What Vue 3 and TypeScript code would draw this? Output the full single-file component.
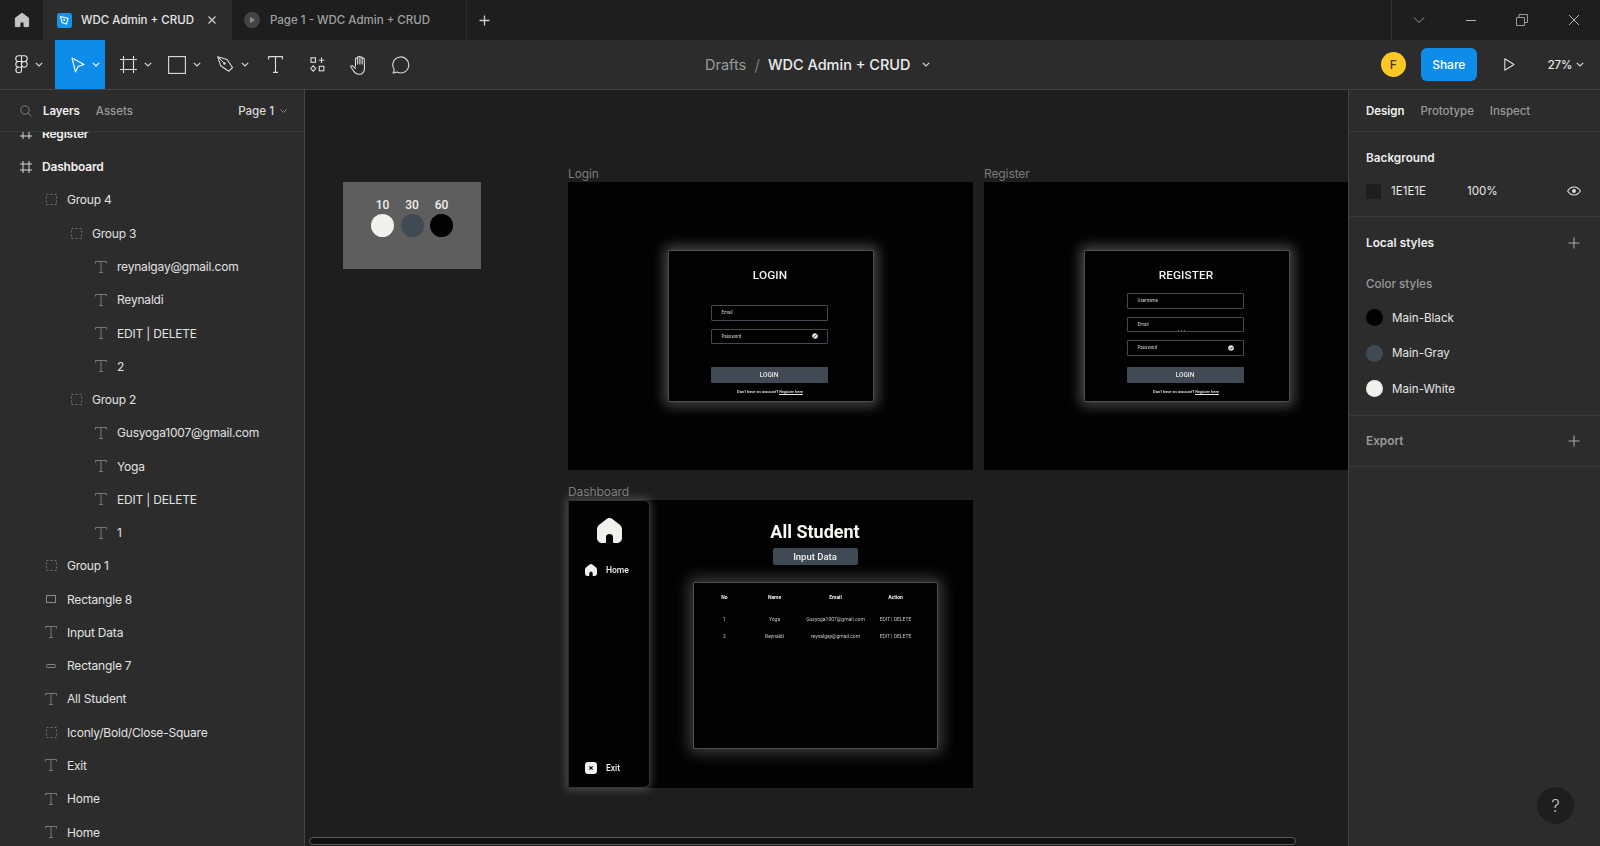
<script setup lang="ts">
interface Layer { name: string; icon: 'frame' | 'group' | 'text' | 'rect' | 'bar'; depth: number; strong?: boolean }
const layers: Layer[] = [
  { name: 'Register', icon: 'frame', depth: 0, strong: true },
  { name: 'Dashboard', icon: 'frame', depth: 0, strong: true },
  { name: 'Group 4', icon: 'group', depth: 1 },
  { name: 'Group 3', icon: 'group', depth: 2 },
  { name: 'reynalgay@gmail.com', icon: 'text', depth: 3 },
  { name: 'Reynaldi', icon: 'text', depth: 3 },
  { name: 'EDIT | DELETE', icon: 'text', depth: 3 },
  { name: '2', icon: 'text', depth: 3 },
  { name: 'Group 2', icon: 'group', depth: 2 },
  { name: 'Gusyoga1007@gmail.com', icon: 'text', depth: 3 },
  { name: 'Yoga', icon: 'text', depth: 3 },
  { name: 'EDIT | DELETE', icon: 'text', depth: 3 },
  { name: '1', icon: 'text', depth: 3 },
  { name: 'Group 1', icon: 'group', depth: 1 },
  { name: 'Rectangle 8', icon: 'rect', depth: 1 },
  { name: 'Input Data', icon: 'text', depth: 1 },
  { name: 'Rectangle 7', icon: 'bar', depth: 1 },
  { name: 'All Student', icon: 'text', depth: 1 },
  { name: 'Iconly/Bold/Close-Square', icon: 'group', depth: 1 },
  { name: 'Exit', icon: 'text', depth: 1 },
  { name: 'Home', icon: 'text', depth: 1 },
  { name: 'Home', icon: 'text', depth: 1 },
]
const depthClass = (d: number): string => `depth${d}`
const styles = [
  { name: 'Main-Black', color: '#020202' },
  { name: 'Main-Gray', color: '#3f4a54' },
  { name: 'Main-White', color: '#f0f0ec' },
]
const swatches = [
  { label: '10', color: '#f0f0ec' },
  { label: '30', color: '#3f4a54' },
  { label: '60', color: '#020202' },
]
const rows = [
  { no: '1', name: 'Yoga', email: 'Gusyoga1007@gmail.com', action: 'EDIT | DELETE' },
  { no: '2', name: 'Reynaldi', email: 'reynalgay@gmail.com', action: 'EDIT | DELETE' },
]
</script>

<template>
  <div class="app">
    <header class="tabbar">
      <div class="hometab">
        <svg width="16" height="16" viewBox="0 0 16 16"><path d="M8 1.2 14.6 6v8.6H10V10H6v4.6H1.4V6z" fill="#c4c4c4" stroke="#c4c4c4" stroke-linejoin="round"/></svg>
      </div>
      <div class="tab active">
        <span class="fileicon"><svg width="15" height="15" viewBox="0 0 15 15"><rect width="15" height="15" rx="2.5" fill="#1592ea"/><path d="M3.5 3.5 11 5.5 9.5 11 5 9.5z" fill="none" stroke="#fff" stroke-width="1.1"/><circle cx="7.2" cy="7" r="1" fill="#fff"/></svg></span>
        <span class="tabtitle">WDC Admin + CRUD</span>
        <svg class="tabclose" width="10" height="10" viewBox="0 0 10 10"><path d="M1.5 1.5l7 7M8.500 1.500l-7 7" stroke="#cfcfcf" stroke-width="1.200"/></svg>
      </div>
      <div class="tab inactive">
        <span class="playdot"><svg width="16" height="16" viewBox="0 0 16 16"><circle cx="8" cy="8" r="8" fill="#444"/><path d="M6 4.800v6.400l5-3.200z" fill="#8a8a8a"/></svg></span>
        <span class="tabtitle dim">Page 1 - WDC Admin + CRUD</span>
      </div>
      <div class="newtab">
        <svg width="11" height="11" viewBox="0 0 11 11"><path d="M5.500 .500v10M.5 5.500h10" stroke="#cfcfcf" stroke-width="1.300"/></svg>
      </div>
      <div class="winctl">
        <span class="winbtn"><svg width="12" height="12" viewBox="0 0 12 12"><path d="M1 3.500 6 8.500l5-5" fill="none" stroke="#9a9a9a"/></svg></span>
        <span class="winbtn"><svg width="12" height="12" viewBox="0 0 12 12"><path d="M1 6.500h10" stroke="#b5b5b5"/></svg></span>
        <span class="winbtn"><svg width="12" height="12" viewBox="0 0 12 12"><path d="M.5 3.500h8v8h-8zM3 3.500V.5h8.500v8H8.500" fill="none" stroke="#9a9a9a"/></svg></span>
        <span class="winbtn"><svg width="12" height="12" viewBox="0 0 12 12"><path d="M1 1l10 10M11 1 1 11" stroke="#b5b5b5"/></svg></span>
      </div>
    </header>

    <nav class="toolbar">
      <div class="tools">
        <div class="tool logo">
          <svg width="13" height="19" viewBox="0 0 13 19" fill="none" stroke="#e4e4e4" stroke-width="1.100"><path d="M6.500.8H3.600a2.800 2.800 0 0 0 0 5.700h2.900zM6.500.8h2.900a2.800 2.800 0 0 1 0 5.700H6.500zM6.500 6.500H3.600a2.800 2.800 0 0 0 0 5.700h2.900zM12.200 9.300a2.800 2.800 0 1 1-5.700 0 2.800 2.800 0 0 1 5.700 0zM6.500 12.200H3.600a2.800 2.800 0 1 0 2.900 2.800z"/></svg>
          <svg class="chev" width="8" height="5" viewBox="0 0 8 5"><path d="M.8.800 4 4l3.200-3.200" fill="none" stroke="#dcdcdc" stroke-width="1.100"/></svg>
        </div>
        <div class="tool move">
          <svg width="14" height="16" viewBox="0 0 14 16"><path d="M1 1 13 7.500 7 9.500 4.500 15z" fill="none" stroke="#fff" stroke-width="1.100" stroke-linejoin="round"/></svg>
          <svg class="chev" width="8" height="5" viewBox="0 0 8 5"><path d="M.8.800 4 4l3.200-3.200" fill="none" stroke="#fff" stroke-width="1.100"/></svg>
        </div>
        <div class="tool frame">
          <svg width="17" height="17" viewBox="0 0 17 17"><path d="M3.500 0v17M13.500 0v17M0 3.500h17M0 13.500h17" stroke="#dcdcdc" stroke-width="1.100"/></svg>
          <svg class="chev" width="8" height="5" viewBox="0 0 8 5"><path d="M.8.800 4 4l3.200-3.200" fill="none" stroke="#dcdcdc" stroke-width="1.100"/></svg>
        </div>
        <div class="tool shape">
          <svg width="18" height="18" viewBox="0 0 18 18"><rect x=".6" y=".6" width="16.800" height="16.800" fill="none" stroke="#dcdcdc" stroke-width="1.100"/></svg>
          <svg class="chev" width="8" height="5" viewBox="0 0 8 5"><path d="M.8.800 4 4l3.200-3.200" fill="none" stroke="#dcdcdc" stroke-width="1.100"/></svg>
        </div>
        <div class="tool pen">
          <svg width="17" height="17" viewBox="0 0 17 17"><path d="M.8.800 10 3.500l5.500 8-3.800 3.800-8-5.500z" fill="none" stroke="#dcdcdc" stroke-width="1.100" stroke-linejoin="round"/><path d="M.8.800 7 7" stroke="#dcdcdc"/><circle cx="7.500" cy="7.500" r="1.200" fill="#dcdcdc"/></svg>
          <svg class="chev" width="8" height="5" viewBox="0 0 8 5"><path d="M.8.800 4 4l3.200-3.200" fill="none" stroke="#dcdcdc" stroke-width="1.100"/></svg>
        </div>
        <div class="tool texttool">
          <svg width="15" height="17" viewBox="0 0 15 17"><path d="M.6 3.500V.6h13.800v2.900M7.500.6v15.800M5 16.400h5" fill="none" stroke="#dcdcdc" stroke-width="1.100"/></svg>
        </div>
        <div class="tool res">
          <svg width="15" height="15" viewBox="0 0 15 15" fill="none" stroke="#dcdcdc" stroke-width="1.100"><rect x="1" y=".8" width="4.500" height="4.500"/><path d="M11.500 .5v5.500M8.800 3.200h5.500"/><path d="M3.200 8.800 5.700 11.500 3.200 14.200.7 11.500z"/><rect x="9.300" y="9.300" width="4.500" height="4.500"/></svg>
        </div>
        <div class="tool hand">
          <svg width="19" height="20" viewBox="0 0 19 20"><path d="M5.500 11V4a1.100 1.100 0 0 1 2.200 0V2.400a1.100 1.100 0 0 1 2.200 0V3a1.100 1.100 0 0 1 2.200 0v1.200a1.100 1.100 0 0 1 2.200 0l.2 8.800c0 4-2.400 6.300-5.600 6.300-2.700 0-4-1.400-5.500-3.600L1 12.300c-.7-1.200.8-2.200 1.900-1.200l2.600 2.400M7.700 4v5M9.900 3v6M12.100 3v6" fill="none" stroke="#dcdcdc" stroke-width="1.100" stroke-linecap="round" stroke-linejoin="round"/></svg>
        </div>
        <div class="tool comment">
          <svg width="18" height="18" viewBox="0 0 18 18"><path d="M1 17c.7-1 1.200-2.200 1.200-3.500A8 8 0 1 1 5 16c-1.300.7-2.600 1-4 1z" fill="none" stroke="#dcdcdc" stroke-width="1.100" stroke-linejoin="round"/></svg>
        </div>
      </div>
      <div class="crumbs">
        <span class="drafts">Drafts</span>
        <span class="slash">/</span>
        <span class="docname">WDC Admin + CRUD</span>
        <svg width="8" height="5" viewBox="0 0 8 5"><path d="M.8.800 4 4l3.200-3.200" fill="none" stroke="#dcdcdc" stroke-width="1.100"/></svg>
      </div>
      <div class="actions">
        <span class="avatar">F</span>
        <span class="share">Share</span>
        <svg class="play" width="11" height="13" viewBox="0 0 11 13"><path d="M.8.800 10 6.500.8 12.200z" fill="none" stroke="#dcdcdc" stroke-width="1.100" stroke-linejoin="round"/></svg>
        <span class="zoomval">27%</span>
        <svg width="8" height="5" viewBox="0 0 8 5"><path d="M.8.800 4 4l3.200-3.200" fill="none" stroke="#dcdcdc" stroke-width="1.100"/></svg>
      </div>
    </nav>

    <div class="workspace">
      <aside class="left">
        <div class="panelhead">
          <svg class="search" width="12" height="12" viewBox="0 0 12 12"><circle cx="5" cy="5" r="4.200" fill="none" stroke="#7f7f7f"/><path d="M8 8l3.500 3.500" stroke="#7f7f7f"/></svg>
          <span class="ptab on">Layers</span>
          <span class="ptab">Assets</span>
          <span class="pageselect">Page 1
            <svg width="7" height="4" viewBox="0 0 7 4"><path d="M.5.500 3.500 3.500l3-3" fill="none" stroke="#8a8a8a"/></svg>
          </span>
        </div>
        <ul class="layerlist">
          <li v-for="(l, i) in layers" :key="i" class="layer" :class="[depthClass(l.depth), { strong: l.strong }]">
            <span class="layericon">
              <svg v-if="l.icon === 'frame'" width="12" height="12" viewBox="0 0 12 12"><path d="M3 0v12M9 0v12M0 3h12M0 9h12" stroke="#d8d8d8"/></svg>
              <svg v-else-if="l.icon === 'group'" width="11" height="11" viewBox="0 0 11 11"><rect x=".5" y=".5" width="10" height="10" fill="none" stroke="#6e6e6e" stroke-dasharray="2 2"/></svg>
              <svg v-else-if="l.icon === 'text'" width="12" height="12" viewBox="0 0 12 12"><path d="M.5 2.500V.5h11v2M6 .5v11M4 11.500h4" fill="none" stroke="#787878"/></svg>
              <svg v-else-if="l.icon === 'rect'" width="10" height="8" viewBox="0 0 10 8"><rect x=".5" y=".5" width="9" height="7" fill="none" stroke="#8a8a8a"/></svg>
              <svg v-else width="10" height="4" viewBox="0 0 10 4"><rect x=".5" y=".5" width="9" height="3" rx="1" fill="none" stroke="#8a8a8a"/></svg>
            </span>
            <span class="layername">{{ l.name }}</span>
          </li>
        </ul>
      </aside>

      <main class="canvas">
        <section class="board palette">
          <div class="palcols">
            <div v-for="s in swatches" :key="s.label" class="palcol">
              <span class="pallabel">{{ s.label }}</span>
              <span class="paldot" :style="{ background: s.color }"></span>
            </div>
          </div>
        </section>

        <span class="boardlabel lbl-login">Login</span>
        <section class="board loginboard">
          <form class="card logincard">
            <h2 class="cardtitle">LOGIN</h2>
            <div class="field">Email</div>
            <div class="field pw">Password
              <svg width="6" height="6" viewBox="0 0 6 6"><circle cx="3" cy="3" r="2.800" fill="#e6e6e6"/><path d="M1 5l4-4" stroke="#222" stroke-width=".7"/></svg>
            </div>
            <div class="cta">LOGIN</div>
            <p class="foot">Don't have an account? <u>Register here</u></p>
          </form>
        </section>

        <span class="boardlabel lbl-register">Register</span>
        <section class="board registerboard">
          <form class="card registercard">
            <h2 class="cardtitle">REGISTER</h2>
            <div class="field">Username</div>
            <div class="field">Email</div>
            <span class="dots"><i></i><i></i><i></i></span>
            <div class="field pw">Password
              <svg width="6" height="6" viewBox="0 0 6 6"><circle cx="3" cy="3" r="2.800" fill="#e6e6e6"/><path d="M1.500 3 3 4.300 4.600 1.800" fill="none" stroke="#222" stroke-width=".7"/></svg>
            </div>
            <div class="cta">LOGIN</div>
            <p class="foot">Don't have an account? <u>Register here</u></p>
          </form>
        </section>

        <span class="boardlabel lbl-dash">Dashboard</span>
        <section class="board dashboard">
          <div class="sidebar">
            <svg class="bighome" width="25" height="25" viewBox="0 0 25 25"><path d="M12.500 0c1.300 0 2.500.6 3.500 1.400l6.500 5.200C24 7.800 25 9.500 25 11.500V20c0 2.800-2.200 5-5 5h-3c-.6 0-1-.4-1-1v-5c0-1.700-1.500-3-3.500-3S9 17.300 9 19v5c0 .6-.4 1-1 1H5c-2.800 0-5-2.200-5-5v-8.500c0-2 1-3.700 2.500-4.900L9 1.400C10 .6 11.200 0 12.500 0z" fill="#f0f0ec"/></svg>
            <div class="navitem home">
              <svg width="12" height="12" viewBox="0 0 25 25"><path d="M12.500 0c1.300 0 2.500.6 3.500 1.400l6.500 5.200C24 7.800 25 9.500 25 11.500V20c0 2.800-2.200 5-5 5h-3c-.6 0-1-.4-1-1v-5c0-1.700-1.500-3-3.500-3S9 17.300 9 19v5c0 .6-.4 1-1 1H5c-2.800 0-5-2.200-5-5v-8.500c0-2 1-3.700 2.500-4.900L9 1.400C10 .6 11.200 0 12.500 0z" fill="#f0f0ec"/></svg>
              <span>Home</span>
            </div>
            <div class="navitem exit">
              <svg width="12" height="12" viewBox="0 0 12 12"><rect width="12" height="12" rx="3" fill="#f0f0ec"/><path d="M4.300 4.300l3.400 3.400M7.700 4.300 4.300 7.700" stroke="#111" stroke-width="1.200"/></svg>
              <span>Exit</span>
            </div>
          </div>
          <div class="dashmain">
            <h1 class="dashtitle">All Student</h1>
            <div class="inputbtn">Input Data</div>
            <div class="tablecard">
              <table class="students">
                <thead>
                  <tr><th class="cno">No</th><th class="cname">Name</th><th class="cmail">Email</th><th class="cact">Action</th></tr>
                </thead>
                <tbody>
                  <tr v-for="r in rows" :key="r.no">
                    <td class="cno">{{ r.no }}</td><td class="cname">{{ r.name }}</td><td class="cmail">{{ r.email }}</td><td class="cact">{{ r.action }}</td>
                  </tr>
                </tbody>
              </table>
            </div>
          </div>
        </section>

        <div class="scrollbar"></div>
      </main>

      <aside class="right">
        <div class="panelhead righthead">
          <span class="ptab on">Design</span>
          <span class="ptab">Prototype</span>
          <span class="ptab">Inspect</span>
        </div>
        <section class="rsec bgsec">
          <h3 class="rhead">Background</h3>
          <div class="bgrow">
            <span class="bgchip"></span>
            <span class="bghex">1E1E1E</span>
            <span class="bgpct">100%</span>
            <svg class="eye" width="14" height="10" viewBox="0 0 14 10"><path d="M.7 5C2.200 2.300 4.400 1 7 1s4.800 1.300 6.300 4C11.800 7.700 9.600 9 7 9S2.200 7.700.7 5z" fill="none" stroke="#e4e4e4" stroke-width="1.100"/><circle cx="7" cy="5" r="1.900" fill="#e4e4e4"/></svg>
          </div>
        </section>
        <section class="rsec stylesec">
          <div class="rheadrow">
            <h3 class="rhead">Local styles</h3>
            <svg width="12" height="12" viewBox="0 0 12 12"><path d="M6 .5v11M.5 6h11" stroke="#a8a8a8" stroke-width="1.100"/></svg>
          </div>
          <p class="subhead">Color styles</p>
          <div v-for="s in styles" :key="s.name" class="stylerow">
            <span class="styledot" :style="{ background: s.color }"></span>
            <span>{{ s.name }}</span>
          </div>
        </section>
        <section class="rsec exportsec">
          <div class="rheadrow">
            <h3 class="rhead muted">Export</h3>
            <svg width="12" height="12" viewBox="0 0 12 12"><path d="M6 .5v11M.5 6h11" stroke="#a8a8a8" stroke-width="1.100"/></svg>
          </div>
        </section>
        <div class="help">?</div>
      </aside>
    </div>
  </div>
</template>

<style>
html, body { margin: 0; background: #2c2c2c; overflow: hidden; }
</style>

<style scoped>
.app { width: 1600px; height: 846px; display: flex; flex-direction: column; overflow: hidden; font-family: Inter, "Liberation Sans", sans-serif; color: #e8e8e8; font-size: 11.600px; }
.tabbar { height: 40px; background: #1e1e1e; display: flex; align-items: stretch; flex: none; }
.hometab { width: 43px; display: flex; align-items: center; justify-content: center; }
.tab { display: flex; align-items: center; font-size: 11.500px; font-weight: 500; box-sizing: border-box; }
.tab.active { width: 189px; background: #2c2c2c; padding-left: 14px; }
.tab.inactive { width: 235px; padding-left: 12px; border-right: 1px solid #2c2c2c; }
.fileicon { display: flex; margin-right: 9px; }
.playdot { display: flex; margin-right: 10px; }
.tabtitle { white-space: nowrap; color: #e6e6e6; }
.tabtitle.dim { color: #a0a0a0; }
.tabclose { margin-left: 13px; }
.newtab { width: 36px; display: flex; align-items: center; justify-content: center; margin-left: -1px; }
.winctl { margin-left: auto; width: 209px; border-left: 1px solid #333; display: flex; box-sizing: border-box; padding-left: 1px; }
.winbtn { width: 52px; display: flex; align-items: center; justify-content: center; }
.toolbar { height: 50px; flex: none; background: #2c2c2c; border-bottom: 1px solid #444; box-sizing: border-box; display: flex; position: relative; align-items: stretch; }
.tools { display: flex; align-items: center; height: 49px; }
.tool { height: 49px; display: flex; align-items: center; box-sizing: border-box; }
.chev { margin-left: 7px; }
.logo { width: 55px; padding-left: 15px; }
.move { width: 50px; background: #0d8ce9; padding-left: 16px; }
.frame { width: 48px; padding-left: 15px; }
.shape { width: 48px; padding-left: 15px; }
.pen { width: 49px; padding-left: 16px; }
.texttool { width: 60px; padding-left: 18px; }
.res { width: 40px; }
.hand { width: 42px; }
.comment { width: 30px; }
.crumbs { position: absolute; left: 705px; top: 0; height: 49px; display: flex; align-items: center; font-size: 14.500px; }
.drafts { color: #9a9a9a; }
.slash { color: #777; margin: 0 8px; font-size: 16px; }
.docname { color: #ececec; font-weight: 500; margin-right: 11px; }
.actions { margin-left: auto; display: flex; align-items: center; height: 49px; padding-right: 16px; }
.avatar { width: 25px; height: 25px; border-radius: 50%; background: #fcc825; color: #4a3a10; display: flex; align-items: center; justify-content: center; font-size: 12px; font-weight: 500; margin-right: 15px; }
.share { width: 56px; height: 33px; border-radius: 6px; background: #0d8ce9; color: #fff; display: flex; align-items: center; justify-content: center; font-weight: 500; font-size: 12px; margin-right: 27px; }
.play { margin-right: 33px; }
.zoomval { font-size: 11.400px; font-weight: 500; margin-right: 4px; letter-spacing: -.2px; }
.workspace { flex: 1; display: flex; min-height: 0; }
.left { width: 305px; flex: none; box-sizing: border-box; background: #2c2c2c; border-right: 1px solid #444; display: flex; flex-direction: column; }
.panelhead { height: 42px; flex: none; border-bottom: 1px solid #3a3a3a; box-sizing: border-box; display: flex; align-items: center; padding-left: 20px; }
.search { margin-right: 11px; }
.ptab { color: #9a9a9a; font-weight: 500; font-size: 11.500px; margin-right: 16px; letter-spacing: -.05px; }
.ptab.on { color: #f0f0f0; font-weight: 600; }
.pageselect { margin-left: auto; margin-right: 17px; color: #d8d8d8; font-weight: 500; display: flex; align-items: center; gap: 6px; }
.layerlist { list-style: none; margin: 0; padding: 0; overflow: hidden; flex: 1; }
.layer { height: 33.280px; display: flex; align-items: center; white-space: nowrap; color: #e2e2e2; font-size: 12px; letter-spacing: -.2px; }
.layer:first-child { margin-top: -15.200px; }
.layer.strong { font-weight: 600; color: #f0f0f0; }
.depth0 { padding-left: 20px; }
.depth1 { padding-left: 45px; }
.depth2 { padding-left: 70px; }
.depth3 { padding-left: 95px; }
.layericon { width: 12px; height: 12px; display: flex; align-items: center; justify-content: center; margin-right: 10px; }
.canvas { flex: 1; position: relative; background: #1e1e1e; overflow: hidden; }
.board { position: absolute; background: #020202; }
.boardlabel { position: absolute; font-size: 12px; letter-spacing: -.1px; color: #7b7b7b; line-height: 14px; }
.palette { left: 38px; top: 92px; width: 138px; height: 87px; background: #5e5e5e; }
.palcols { display: flex; gap: 6.500px; justify-content: center; padding-top: 16px; }
.palcol { display: flex; flex-direction: column; align-items: center; width: 23px; gap: 2px; }
.pallabel { font-family: Roboto, sans-serif; font-weight: 500; font-size: 12px; line-height: 14px; color: #f0f0ec; }
.paldot { width: 23px; height: 23px; border-radius: 50%; }
.lbl-login { left: 263px; top: 77px; }
.lbl-register { left: 679px; top: 77px; }
.lbl-dash { left: 263px; top: 395px; }
.loginboard { left: 263px; top: 92px; width: 405px; height: 288px; }
.registerboard { left: 679px; top: 92px; width: 405px; height: 288px; }
.card { position: absolute; top: 68px; width: 206px; height: 152px; box-sizing: border-box; border: 1px solid #4a5058; border-radius: 1px; background: #020202; box-shadow: 0 0 13px 4px rgba(240, 240, 236, .3); display: flex; flex-direction: column; align-items: center; font-family: Roboto, sans-serif; margin: 0; padding-right: 2px; filter: blur(.3px); }
.logincard { left: 100px; }
.registercard { left: 100px; }
.cardtitle { margin: 17px 0 0; font-size: 11.800px; line-height: 14px; font-weight: 500; color: #f0f0ec; letter-spacing: .1px; }
.logincard .cardtitle { margin-bottom: 23px; }
.registercard .cardtitle { margin-bottom: 11px; }
.field { width: 117px; height: 15.500px; box-sizing: border-box; border: 1px solid #3f4a54; border-radius: 1px; font-size: 4.500px; color: #cfcfcf; display: flex; align-items: center; justify-content: space-between; padding: 0 9px 0 10px; margin: 0 0 8px -2px; flex: none; }
.logincard .pw { margin-bottom: 22.500px; }
.registercard .pw { margin-bottom: 11px; }
.dots { position: absolute; left: 93px; top: 79px; display: flex; gap: 2px; }
.dots i { width: 1px; height: 1px; background: #6a6a6a; }
.cta { width: 117px; height: 16px; margin-left: -2px; background: #3f4a54; border-radius: 1px; color: #e6e6e6; font-size: 6.500px; font-weight: 500; display: flex; align-items: center; justify-content: center; flex: none; }
.foot { margin: 6px 0 0; font-size: 4px; line-height: 6px; color: #e6e6e6; font-weight: 500; }
.dashboard { left: 263px; top: 410px; width: 405px; height: 288px; display: flex; }
.sidebar { width: 82px; flex: none; box-sizing: border-box; border: 1px solid #30353b; border-left-color: #24282c; border-radius: 0 6px 6px 0; background: #020202; box-shadow: 0 0 9px 2px rgba(240, 240, 236, .22); display: flex; flex-direction: column; position: relative; z-index: 1; padding: 17px 0 0 16px; }
.bighome { margin-left: 12px; margin-bottom: 20px; flex: none; }
.navitem { display: flex; align-items: center; gap: 9px; font-family: Roboto, sans-serif; font-size: 8.500px; font-weight: 500; color: #f0f0ec; filter: blur(.2px); }
.home { margin-top: 1px; }
.exit { margin-top: auto; margin-bottom: 13px; }
.dashmain { flex: 1; display: flex; flex-direction: column; align-items: center; font-family: Roboto, sans-serif; padding-left: 7px; padding-top: 21px; box-sizing: border-box; }
.dashtitle { margin: 0; font-size: 18px; line-height: 22px; font-weight: 700; color: #f6f6f2; filter: blur(.2px); }
.inputbtn { width: 85px; height: 17px; margin-top: 5px; border-radius: 2px; background: #3f4a54; color: #f0f0ec; font-size: 9.500px; font-weight: 500; display: flex; align-items: center; justify-content: center; filter: blur(.2px); }
.tablecard { width: 245px; height: 167px; margin-top: 17px; box-sizing: border-box; border: 1px solid #4a5058; border-radius: 1px; background: #020202; box-shadow: 0 0 15px 4px rgba(240, 240, 236, .26); padding-top: 8px; filter: blur(.3px); }
.students { border-collapse: collapse; width: 220px; table-layout: fixed; font-size: 5px; color: #c4c4c4; }
.students th { font-weight: 700; color: #f0f0ec; height: 12px; padding: 0 0 7px; }
.students td { height: 17.500px; padding: 0; text-align: center; white-space: nowrap; }
.cno { width: 62px; }
.cname { width: 38px; }
.cmail { width: 84px; }
.cact { width: 36px; }
.scrollbar { position: absolute; left: 4px; bottom: 1px; width: 987px; height: 8px; box-sizing: border-box; border: 1px solid #5a5a5a; border-radius: 5px; background: #111; }
.right { width: 252px; flex: none; box-sizing: border-box; background: #2c2c2c; border-left: 1px solid #444; position: relative; margin-left: 0; }
.righthead { padding-left: 17px; }
.rsec { border-bottom: 1px solid #3a3a3a; padding: 0 18px 0 17px; box-sizing: border-box; }
.bgsec { height: 85px; padding-top: 18px; }
.rhead { margin: 0; font-size: 11.800px; line-height: 16px; font-weight: 600; color: #ececec; }
.rhead.muted { color: #9a9a9a; }
.bgrow { display: flex; align-items: center; margin-top: 17px; height: 16px; }
.bgchip { width: 15px; height: 15px; background: #1e1e1e; margin-right: 10px; }
.bghex { width: 76px; }
.eye { margin-left: auto; margin-right: 1px; }
.stylesec { height: 199px; padding-top: 18px; }
.rheadrow { display: flex; justify-content: space-between; align-items: center; height: 16px; padding-right: 2px; }
.subhead { margin: 25px 0 0; color: #9a9a9a; font-weight: 500; line-height: 16px; }
.stylerow { display: flex; align-items: center; gap: 9px; height: 35.600px; color: #e6e6e6; }
.subhead + .stylerow { margin-top: 8px; }
.styledot { width: 17px; height: 17px; border-radius: 50%; flex: none; }
.exportsec { height: 51px; padding-top: 17px; }
.help { position: absolute; right: 26px; bottom: 22px; width: 37px; height: 37px; border-radius: 50%; background: #1e1e1e; color: #c8c8c8; display: flex; align-items: center; justify-content: center; font-size: 17px; font-weight: 300; }
</style>
